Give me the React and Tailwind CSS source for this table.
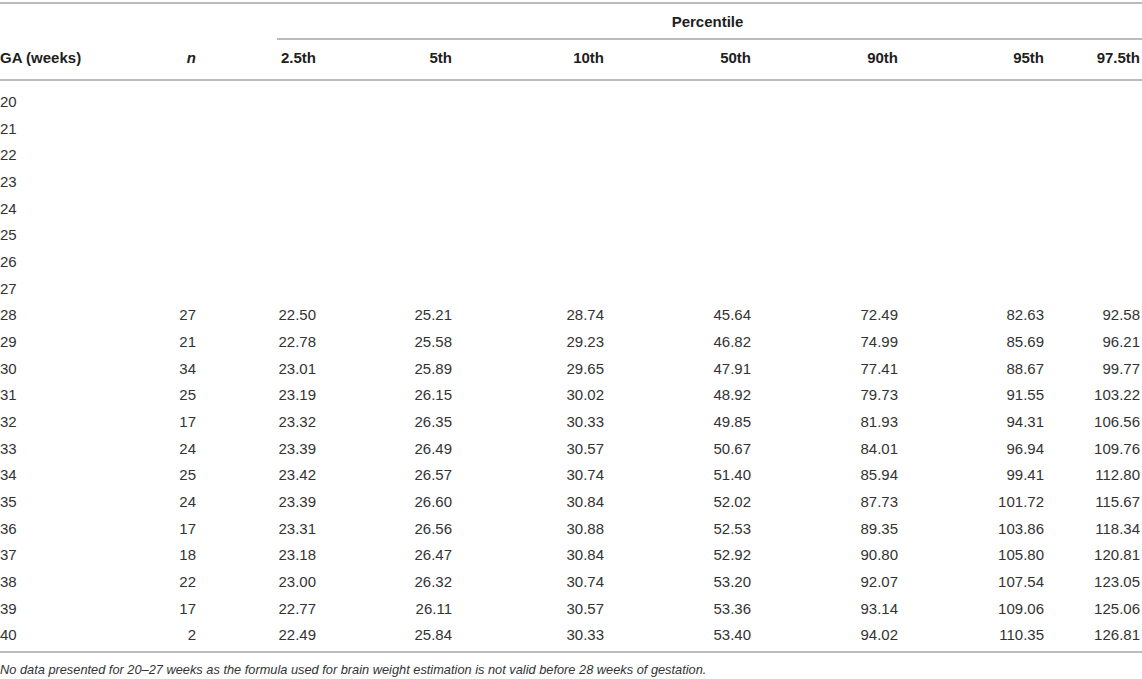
const rows = [
  ["20"], ["21"], ["22"], ["23"], ["24"], ["25"], ["26"], ["27"],
  ["28", "27", "22.50", "25.21", "28.74", "45.64", "72.49", "82.63", "92.58"],
  ["29", "21", "22.78", "25.58", "29.23", "46.82", "74.99", "85.69", "96.21"],
  ["30", "34", "23.01", "25.89", "29.65", "47.91", "77.41", "88.67", "99.77"],
  ["31", "25", "23.19", "26.15", "30.02", "48.92", "79.73", "91.55", "103.22"],
  ["32", "17", "23.32", "26.35", "30.33", "49.85", "81.93", "94.31", "106.56"],
  ["33", "24", "23.39", "26.49", "30.57", "50.67", "84.01", "96.94", "109.76"],
  ["34", "25", "23.42", "26.57", "30.74", "51.40", "85.94", "99.41", "112.80"],
  ["35", "24", "23.39", "26.60", "30.84", "52.02", "87.73", "101.72", "115.67"],
  ["36", "17", "23.31", "26.56", "30.88", "52.53", "89.35", "103.86", "118.34"],
  ["37", "18", "23.18", "26.47", "30.84", "52.92", "90.80", "105.80", "120.81"],
  ["38", "22", "23.00", "26.32", "30.74", "53.20", "92.07", "107.54", "123.05"],
  ["39", "17", "22.77", "26.11", "30.57", "53.36", "93.14", "109.06", "125.06"],
  ["40", "2", "22.49", "25.84", "30.33", "53.40", "94.02", "110.35", "126.81"],
];

// columns are right aligned except the first one
const cols = "grid grid-cols-[100px_96px_120px_136px_152px_147px_147px_146px_1fr]";

const Cell = ({ i, children }) => {
  if (i === 0) return <div className="text-left whitespace-nowrap">{children}</div>;
  if (i === 8) return <div className="text-right pr-[2px]">{children}</div>;
  return <div className="text-right">{children}</div>;
};

export default function App() {
  return (
    <div className="w-[1142px] bg-white pt-[2px] font-['Liberation_Sans',Arial,sans-serif]">
      <div className="border-t-2 border-[#bcbcbc]" />

      {/* Percentile spanner */}
      <div className="pl-[277px]">
        <div className="h-[34px] flex items-center justify-center pt-[2px] pr-[4px] text-[15px] font-bold text-[#1e1e1e]">
          Percentile
        </div>
        <div className="border-t-2 border-[#bcbcbc]" />
      </div>

      {/* Column headers */}
      <div className={`${cols} h-[39px] items-center pb-[3px] text-[15px] font-bold text-[#1e1e1e]`}>
        <Cell i={0}>GA (weeks)</Cell>
        <Cell i={1}>
          <span className="italic">n</span>
        </Cell>
        {["2.5th", "5th", "10th", "50th", "90th", "95th", "97.5th"].map((h, k) => (
          <Cell key={h} i={k + 2}>
            {h}
          </Cell>
        ))}
      </div>
      <div className="border-t-2 border-[#bcbcbc]" />

      {/* Body */}
      <div className="pt-[8px] pb-[2px] text-[15px] text-[#333]">
        {rows.map((r) => (
          <div key={r[0]} className={`${cols} h-[26.67px] items-center`}>
            {Array.from({ length: 9 }).map((_, i) => (
              <Cell key={i} i={i}>
                {r[i] || ""}
              </Cell>
            ))}
          </div>
        ))}
      </div>
      <div className="border-t-2 border-[#bcbcbc]" />

      <p className="pt-[9px] text-[12.8px] italic text-[#333] leading-[16px]">
        No data presented for 20–27 weeks as the formula used for brain weight estimation is not valid before 28 weeks of gestation.
      </p>
    </div>
  );
}
